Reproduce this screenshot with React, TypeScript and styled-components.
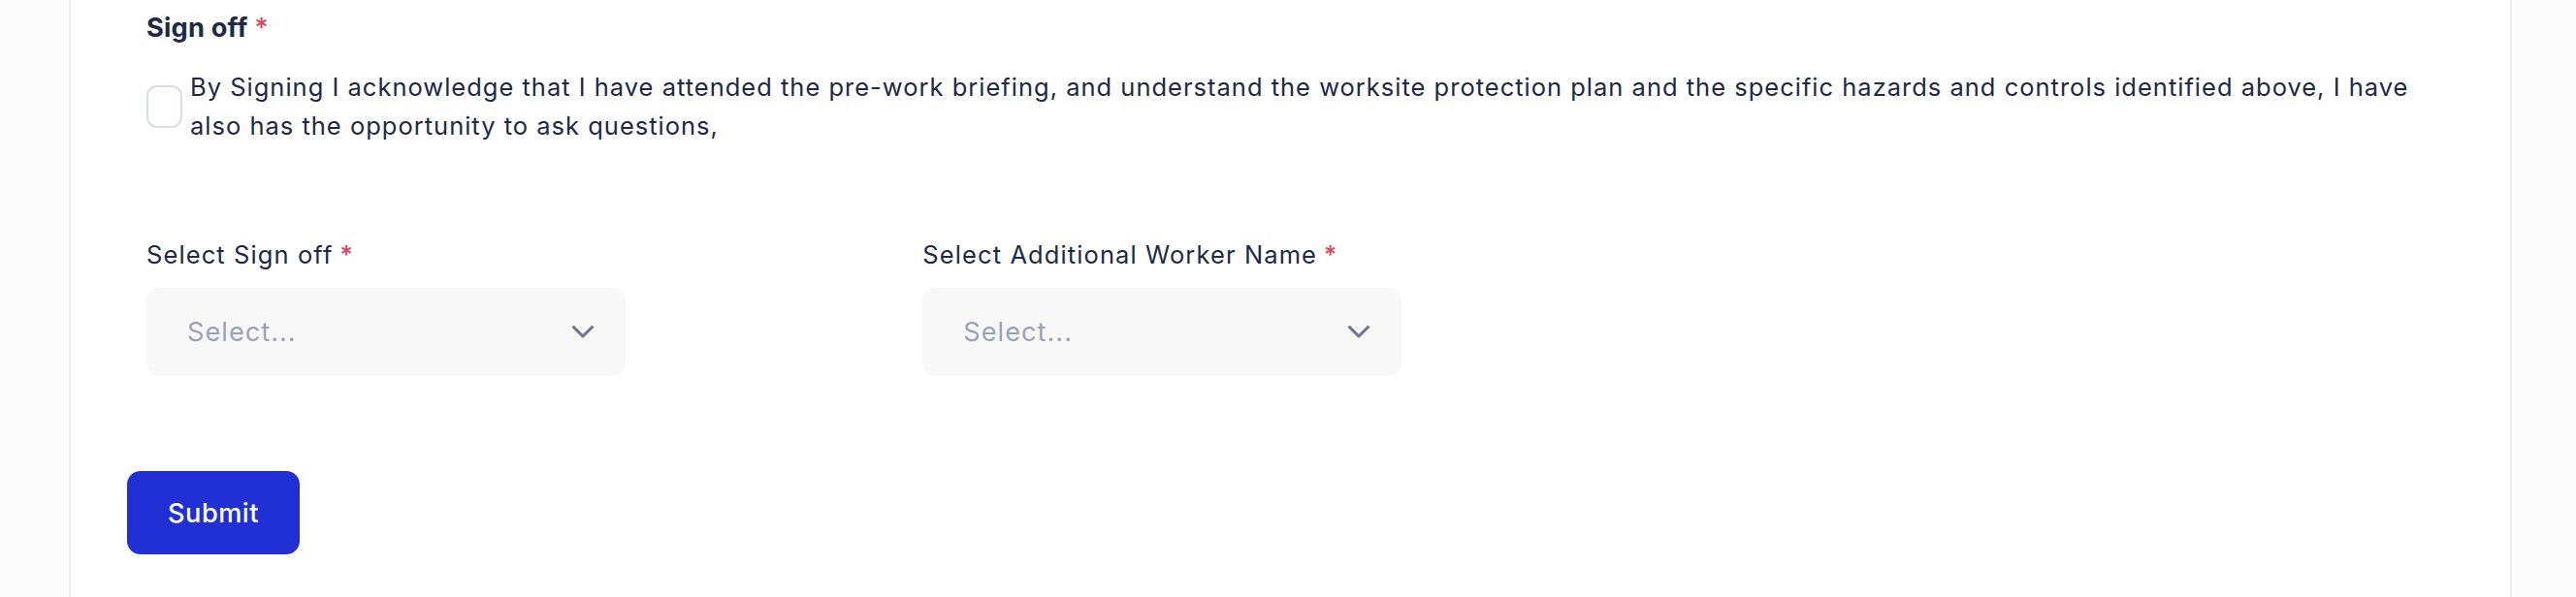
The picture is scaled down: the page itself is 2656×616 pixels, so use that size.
import styled, { createGlobalStyle } from "styled-components";

const GlobalStyle = createGlobalStyle`
  html, body {
    margin: 0;
    padding: 0;
    background: #fcfcfc;
    font-family: Inter, "Noto Sans", sans-serif;
    color: #1e2945;
  }
`;

const Page = styled.div`
  display: flex;
  padding: 0 66px 0 71px;
`;

const Card = styled.main`
  flex: 1;
  min-height: 616px;
  background: #ffffff;
  border-left: 2px solid #eeeeef;
  border-right: 2px solid #eeeeef;
  padding: 9px 58px 0;
  box-sizing: border-box;
`;

const Section = styled.section`
  padding: 0 20px;
`;

const Heading = styled.h3`
  margin: 0;
  font-size: 27.2px;
  line-height: 40px;
  font-weight: 700;
  letter-spacing: 0.2px;
  color: #1e2945;
`;

const Required = styled.span`
  color: #e3405a;
  margin-left: 7px;
  font-weight: 500;
`;

const CheckRow = styled.label`
  display: flex;
  align-items: center;
  gap: 8px;
  margin-top: 21px;
`;

const Box = styled.span`
  flex: 0 0 auto;
  width: 37px;
  height: 44px;
  box-sizing: border-box;
  border: 2px solid #d9dce9;
  border-radius: 11px;
  background: #ffffff;
`;

const CheckText = styled.span`
  font-size: 25.5px;
  line-height: 40px;
  font-weight: 400;
  letter-spacing: 1px;
  color: #1e2945;
`;

const Fields = styled.div`
  display: grid;
  grid-template-columns: repeat(3, 1fr);
  column-gap: 42px;
  margin-top: 93px;
`;

const Field = styled.div`
  display: flex;
  flex-direction: column;
  gap: 14px;
`;

const Label = styled.div`
  font-size: 25.5px;
  line-height: 40px;
  font-weight: 400;
  letter-spacing: 1.1px;
  color: #1e2945;
`;

const SelectBox = styled.div`
  width: 494px;
  height: 91px;
  box-sizing: border-box;
  background: #f8f8f9;
  border-radius: 14px;
  display: flex;
  align-items: center;
  justify-content: space-between;
  padding: 0 33px 0 42px;
`;

const Placeholder = styled.span`
  font-size: 27.2px;
  letter-spacing: 1px;
  color: #9aa2b9;
`;

const Chevron = styled.svg`
  width: 22px;
  height: 13px;
  stroke: #6b7490;
  stroke-width: 3;
  fill: none;
`;

const SubmitButton = styled.button`
  margin-top: 98px;
  height: 86px;
  padding: 0 42px;
  border: none;
  border-radius: 14px;
  background: #2130d4;
  color: #ffffff;
  font-family: Inter, "Noto Sans", sans-serif;
  font-size: 27.2px;
  font-weight: 500;
  letter-spacing: 0.5px;
  cursor: pointer;
`;

const Select = ({ label }: { label: string }) => (
  <Field>
    <Label>
      {label}
      <Required>*</Required>
    </Label>
    <SelectBox>
      <Placeholder>Select...</Placeholder>
      <Chevron viewBox="0 0 22 13">
        <path d="M1.5 1.5 L11 11 L20.5 1.5" strokeLinecap="round" strokeLinejoin="round" />
      </Chevron>
    </SelectBox>
  </Field>
);

export default function App() {
  return (
    <>
      <GlobalStyle />
      <Page>
        <Card>
          <Section>
            <Heading>
              Sign off<Required>*</Required>
            </Heading>
            <CheckRow>
              <Box />
              <CheckText>
                By Signing I acknowledge that I have attended the pre-work briefing, and understand the
                worksite protection plan and the specific hazards and controls identified above, I have
                also has the opportunity to ask questions,
              </CheckText>
            </CheckRow>
            <Fields>
              <Select label="Select Sign off" />
              <Select label="Select Additional Worker Name" />
            </Fields>
          </Section>
          <SubmitButton>Submit</SubmitButton>
        </Card>
      </Page>
    </>
  );
}
